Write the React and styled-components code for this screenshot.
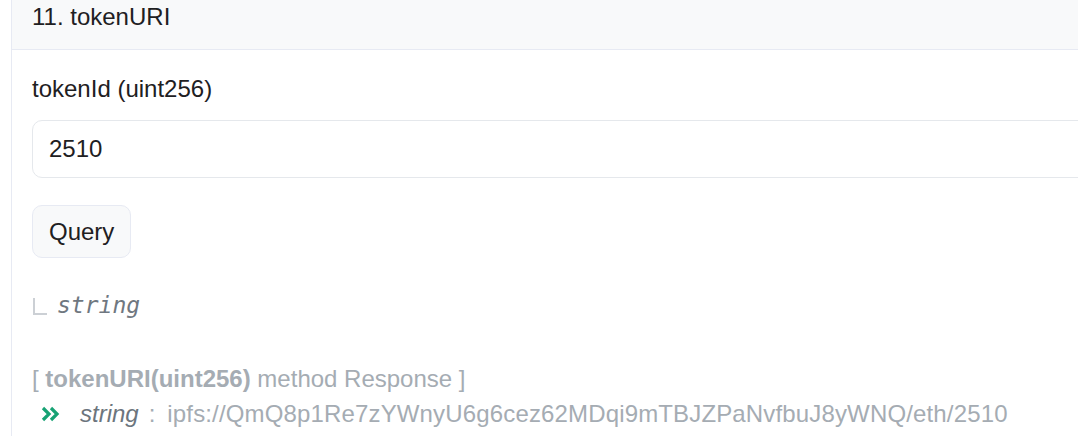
import React from 'react';
import styled, { createGlobalStyle } from 'styled-components';

const GlobalStyle = createGlobalStyle`
  body {
    margin: 0;
    overflow: hidden;
    background: #fff;
    font-family: "Liberation Sans", Arial, sans-serif;
    color: #1e2022;
  }
`;

const Page = styled.div`
  padding-left: 11px;
`;

const Card = styled.div`
  width: 1120px;
  border: 1px solid #e7eaf3;
  border-top: none;
`;

const Header = styled.div`
  background-color: #f8f9fa;
  border-bottom: 1px solid #e7eaf3;
  padding: 0 20px 15px;
  font-size: 24px;
  line-height: 34px;
`;

const Body = styled.div`
  padding: 22px 20px 30px;
`;

const Label = styled.div`
  font-size: 24px;
  line-height: 34px;
  margin-bottom: 14px;
`;

const Input = styled.input`
  display: block;
  box-sizing: border-box;
  width: 100%;
  height: 58px;
  padding: 0 16px;
  border: 1px solid #e5e8ec;
  border-radius: 10px;
  font-family: inherit;
  font-size: 24px;
  color: #1e2022;
  outline: none;
`;

const Button = styled.button`
  display: block;
  box-sizing: border-box;
  margin-top: 27px;
  height: 53px;
  padding: 0 16px;
  background-color: #f8f9fa;
  border: 1px solid #e7eaf3;
  border-radius: 10px;
  font-family: inherit;
  font-size: 24px;
  color: #1e2022;
`;

const ReturnType = styled.div`
  display: flex;
  align-items: center;
  margin-top: 30px;
  height: 34px;
`;

const Corner = styled.span`
  box-sizing: border-box;
  width: 14px;
  height: 17px;
  margin: 2px 10px 0 1px;
  border-left: 2px solid #ccd0d5;
  border-bottom: 2px solid #ccd0d5;
`;

const Mono = styled.span`
  font-family: "DejaVu Sans Mono", "Liberation Mono", monospace;
  font-style: italic;
  font-size: 23px;
  color: #6f7780;
`;

const Response = styled.div`
  margin-top: 39px;
  font-size: 24px;
  line-height: 35px;
  color: #a5acb3;
  white-space: nowrap;
`;

const Bold = styled.b`
  font-weight: 700;
`;

const ResultRow = styled.div`
  display: flex;
  align-items: center;
  padding-left: 9px;
`;

const Arrow = styled.svg`
  width: 19px;
  height: 16px;
  margin-right: 20px;
  flex-shrink: 0;
`;

const TypeName = styled.i`
  color: #6c757d;
  margin-right: 10px;
`;

const Colon = styled.span`
  margin-right: 12px;
`;

const Value = styled.span`
  letter-spacing: 0.15px;
`;

export default function App() {
  return (
    <>
      <GlobalStyle />
      <Page>
        <Card>
          <Header>11. tokenURI</Header>
          <Body>
            <Label>tokenId (uint256)</Label>
            <Input defaultValue="2510" />
            <Button>Query</Button>
            <ReturnType>
              <Corner />
              <Mono>string</Mono>
            </ReturnType>
            <Response>
              <div>
                [ <Bold>tokenURI(uint256)</Bold> method Response ]
              </div>
              <ResultRow>
                <Arrow viewBox="0 0 19 16">
                  <polyline points="2,2 8,8 2,14" fill="none" stroke="#17a274" strokeWidth="3.2" />
                  <polyline points="10,2 16,8 10,14" fill="none" stroke="#17a274" strokeWidth="3.2" />
                </Arrow>
                <TypeName>string</TypeName>
                <Colon>:</Colon>
                <Value>ipfs://QmQ8p1Re7zYWnyU6g6cez62MDqi9mTBJZPaNvfbuJ8yWNQ/eth/2510</Value>
              </ResultRow>
            </Response>
          </Body>
        </Card>
      </Page>
    </>
  );
}
